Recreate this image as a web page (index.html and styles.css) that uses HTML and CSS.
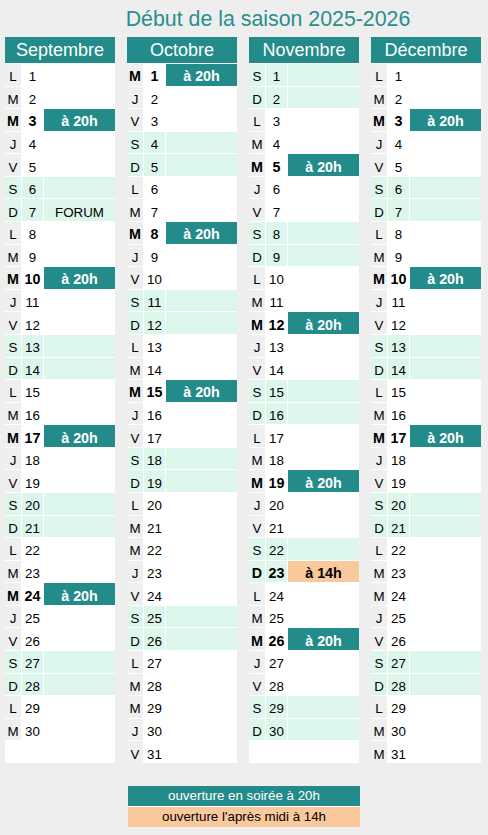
FILE: index.html
```html
<!DOCTYPE html>
<html lang="fr">
<head>
<meta charset="utf-8">
<title>Début de la saison 2025-2026</title>
<link rel="stylesheet" href="styles.css">
</head>
<body>
<h1 class="title">Début de la saison 2025-2026</h1>
<div class="months">
  <section class="month">
    <h2 class="mhead">Septembre</h2>
    <div class="row"><span class="d">L</span><span class="n">1</span><span class="e"></span></div>
    <div class="row"><span class="d">M</span><span class="n">2</span><span class="e"></span></div>
    <div class="row ev"><span class="d">M</span><span class="n">3</span><span class="e soir">à 20h</span></div>
    <div class="row"><span class="d">J</span><span class="n">4</span><span class="e"></span></div>
    <div class="row"><span class="d">V</span><span class="n">5</span><span class="e"></span></div>
    <div class="row we"><span class="d">S</span><span class="n">6</span><span class="e"></span></div>
    <div class="row we"><span class="d">D</span><span class="n">7</span><span class="e txt">FORUM</span></div>
    <div class="row"><span class="d">L</span><span class="n">8</span><span class="e"></span></div>
    <div class="row"><span class="d">M</span><span class="n">9</span><span class="e"></span></div>
    <div class="row ev"><span class="d">M</span><span class="n">10</span><span class="e soir">à 20h</span></div>
    <div class="row"><span class="d">J</span><span class="n">11</span><span class="e"></span></div>
    <div class="row"><span class="d">V</span><span class="n">12</span><span class="e"></span></div>
    <div class="row we"><span class="d">S</span><span class="n">13</span><span class="e"></span></div>
    <div class="row we"><span class="d">D</span><span class="n">14</span><span class="e"></span></div>
    <div class="row"><span class="d">L</span><span class="n">15</span><span class="e"></span></div>
    <div class="row"><span class="d">M</span><span class="n">16</span><span class="e"></span></div>
    <div class="row ev"><span class="d">M</span><span class="n">17</span><span class="e soir">à 20h</span></div>
    <div class="row"><span class="d">J</span><span class="n">18</span><span class="e"></span></div>
    <div class="row"><span class="d">V</span><span class="n">19</span><span class="e"></span></div>
    <div class="row we"><span class="d">S</span><span class="n">20</span><span class="e"></span></div>
    <div class="row we"><span class="d">D</span><span class="n">21</span><span class="e"></span></div>
    <div class="row"><span class="d">L</span><span class="n">22</span><span class="e"></span></div>
    <div class="row"><span class="d">M</span><span class="n">23</span><span class="e"></span></div>
    <div class="row ev"><span class="d">M</span><span class="n">24</span><span class="e soir">à 20h</span></div>
    <div class="row"><span class="d">J</span><span class="n">25</span><span class="e"></span></div>
    <div class="row"><span class="d">V</span><span class="n">26</span><span class="e"></span></div>
    <div class="row we"><span class="d">S</span><span class="n">27</span><span class="e"></span></div>
    <div class="row we"><span class="d">D</span><span class="n">28</span><span class="e"></span></div>
    <div class="row"><span class="d">L</span><span class="n">29</span><span class="e"></span></div>
    <div class="row"><span class="d">M</span><span class="n">30</span><span class="e"></span></div>
  </section>
  <section class="month">
    <h2 class="mhead">Octobre</h2>
    <div class="row ev"><span class="d">M</span><span class="n">1</span><span class="e soir">à 20h</span></div>
    <div class="row"><span class="d">J</span><span class="n">2</span><span class="e"></span></div>
    <div class="row"><span class="d">V</span><span class="n">3</span><span class="e"></span></div>
    <div class="row we"><span class="d">S</span><span class="n">4</span><span class="e"></span></div>
    <div class="row we"><span class="d">D</span><span class="n">5</span><span class="e"></span></div>
    <div class="row"><span class="d">L</span><span class="n">6</span><span class="e"></span></div>
    <div class="row"><span class="d">M</span><span class="n">7</span><span class="e"></span></div>
    <div class="row ev"><span class="d">M</span><span class="n">8</span><span class="e soir">à 20h</span></div>
    <div class="row"><span class="d">J</span><span class="n">9</span><span class="e"></span></div>
    <div class="row"><span class="d">V</span><span class="n">10</span><span class="e"></span></div>
    <div class="row we"><span class="d">S</span><span class="n">11</span><span class="e"></span></div>
    <div class="row we"><span class="d">D</span><span class="n">12</span><span class="e"></span></div>
    <div class="row"><span class="d">L</span><span class="n">13</span><span class="e"></span></div>
    <div class="row"><span class="d">M</span><span class="n">14</span><span class="e"></span></div>
    <div class="row ev"><span class="d">M</span><span class="n">15</span><span class="e soir">à 20h</span></div>
    <div class="row"><span class="d">J</span><span class="n">16</span><span class="e"></span></div>
    <div class="row"><span class="d">V</span><span class="n">17</span><span class="e"></span></div>
    <div class="row we"><span class="d">S</span><span class="n">18</span><span class="e"></span></div>
    <div class="row we"><span class="d">D</span><span class="n">19</span><span class="e"></span></div>
    <div class="row"><span class="d">L</span><span class="n">20</span><span class="e"></span></div>
    <div class="row"><span class="d">M</span><span class="n">21</span><span class="e"></span></div>
    <div class="row"><span class="d">M</span><span class="n">22</span><span class="e"></span></div>
    <div class="row"><span class="d">J</span><span class="n">23</span><span class="e"></span></div>
    <div class="row"><span class="d">V</span><span class="n">24</span><span class="e"></span></div>
    <div class="row we"><span class="d">S</span><span class="n">25</span><span class="e"></span></div>
    <div class="row we"><span class="d">D</span><span class="n">26</span><span class="e"></span></div>
    <div class="row"><span class="d">L</span><span class="n">27</span><span class="e"></span></div>
    <div class="row"><span class="d">M</span><span class="n">28</span><span class="e"></span></div>
    <div class="row"><span class="d">M</span><span class="n">29</span><span class="e"></span></div>
    <div class="row"><span class="d">J</span><span class="n">30</span><span class="e"></span></div>
    <div class="row"><span class="d">V</span><span class="n">31</span><span class="e"></span></div>
  </section>
  <section class="month">
    <h2 class="mhead">Novembre</h2>
    <div class="row we"><span class="d">S</span><span class="n">1</span><span class="e"></span></div>
    <div class="row we"><span class="d">D</span><span class="n">2</span><span class="e"></span></div>
    <div class="row"><span class="d">L</span><span class="n">3</span><span class="e"></span></div>
    <div class="row"><span class="d">M</span><span class="n">4</span><span class="e"></span></div>
    <div class="row ev"><span class="d">M</span><span class="n">5</span><span class="e soir">à 20h</span></div>
    <div class="row"><span class="d">J</span><span class="n">6</span><span class="e"></span></div>
    <div class="row"><span class="d">V</span><span class="n">7</span><span class="e"></span></div>
    <div class="row we"><span class="d">S</span><span class="n">8</span><span class="e"></span></div>
    <div class="row we"><span class="d">D</span><span class="n">9</span><span class="e"></span></div>
    <div class="row"><span class="d">L</span><span class="n">10</span><span class="e"></span></div>
    <div class="row"><span class="d">M</span><span class="n">11</span><span class="e"></span></div>
    <div class="row ev"><span class="d">M</span><span class="n">12</span><span class="e soir">à 20h</span></div>
    <div class="row"><span class="d">J</span><span class="n">13</span><span class="e"></span></div>
    <div class="row"><span class="d">V</span><span class="n">14</span><span class="e"></span></div>
    <div class="row we"><span class="d">S</span><span class="n">15</span><span class="e"></span></div>
    <div class="row we"><span class="d">D</span><span class="n">16</span><span class="e"></span></div>
    <div class="row"><span class="d">L</span><span class="n">17</span><span class="e"></span></div>
    <div class="row"><span class="d">M</span><span class="n">18</span><span class="e"></span></div>
    <div class="row ev"><span class="d">M</span><span class="n">19</span><span class="e soir">à 20h</span></div>
    <div class="row"><span class="d">J</span><span class="n">20</span><span class="e"></span></div>
    <div class="row"><span class="d">V</span><span class="n">21</span><span class="e"></span></div>
    <div class="row we"><span class="d">S</span><span class="n">22</span><span class="e"></span></div>
    <div class="row we ev"><span class="d">D</span><span class="n">23</span><span class="e aprem">à 14h</span></div>
    <div class="row"><span class="d">L</span><span class="n">24</span><span class="e"></span></div>
    <div class="row"><span class="d">M</span><span class="n">25</span><span class="e"></span></div>
    <div class="row ev"><span class="d">M</span><span class="n">26</span><span class="e soir">à 20h</span></div>
    <div class="row"><span class="d">J</span><span class="n">27</span><span class="e"></span></div>
    <div class="row"><span class="d">V</span><span class="n">28</span><span class="e"></span></div>
    <div class="row we"><span class="d">S</span><span class="n">29</span><span class="e"></span></div>
    <div class="row we"><span class="d">D</span><span class="n">30</span><span class="e"></span></div>
  </section>
  <section class="month">
    <h2 class="mhead">Décembre</h2>
    <div class="row"><span class="d">L</span><span class="n">1</span><span class="e"></span></div>
    <div class="row"><span class="d">M</span><span class="n">2</span><span class="e"></span></div>
    <div class="row ev"><span class="d">M</span><span class="n">3</span><span class="e soir">à 20h</span></div>
    <div class="row"><span class="d">J</span><span class="n">4</span><span class="e"></span></div>
    <div class="row"><span class="d">V</span><span class="n">5</span><span class="e"></span></div>
    <div class="row we"><span class="d">S</span><span class="n">6</span><span class="e"></span></div>
    <div class="row we"><span class="d">D</span><span class="n">7</span><span class="e"></span></div>
    <div class="row"><span class="d">L</span><span class="n">8</span><span class="e"></span></div>
    <div class="row"><span class="d">M</span><span class="n">9</span><span class="e"></span></div>
    <div class="row ev"><span class="d">M</span><span class="n">10</span><span class="e soir">à 20h</span></div>
    <div class="row"><span class="d">J</span><span class="n">11</span><span class="e"></span></div>
    <div class="row"><span class="d">V</span><span class="n">12</span><span class="e"></span></div>
    <div class="row we"><span class="d">S</span><span class="n">13</span><span class="e"></span></div>
    <div class="row we"><span class="d">D</span><span class="n">14</span><span class="e"></span></div>
    <div class="row"><span class="d">L</span><span class="n">15</span><span class="e"></span></div>
    <div class="row"><span class="d">M</span><span class="n">16</span><span class="e"></span></div>
    <div class="row ev"><span class="d">M</span><span class="n">17</span><span class="e soir">à 20h</span></div>
    <div class="row"><span class="d">J</span><span class="n">18</span><span class="e"></span></div>
    <div class="row"><span class="d">V</span><span class="n">19</span><span class="e"></span></div>
    <div class="row we"><span class="d">S</span><span class="n">20</span><span class="e"></span></div>
    <div class="row we"><span class="d">D</span><span class="n">21</span><span class="e"></span></div>
    <div class="row"><span class="d">L</span><span class="n">22</span><span class="e"></span></div>
    <div class="row"><span class="d">M</span><span class="n">23</span><span class="e"></span></div>
    <div class="row"><span class="d">M</span><span class="n">24</span><span class="e"></span></div>
    <div class="row"><span class="d">J</span><span class="n">25</span><span class="e"></span></div>
    <div class="row"><span class="d">V</span><span class="n">26</span><span class="e"></span></div>
    <div class="row we"><span class="d">S</span><span class="n">27</span><span class="e"></span></div>
    <div class="row we"><span class="d">D</span><span class="n">28</span><span class="e"></span></div>
    <div class="row"><span class="d">L</span><span class="n">29</span><span class="e"></span></div>
    <div class="row"><span class="d">M</span><span class="n">30</span><span class="e"></span></div>
    <div class="row"><span class="d">M</span><span class="n">31</span><span class="e"></span></div>
  </section>
</div>
<div class="legend">
  <div class="leg soir">ouverture en soirée à 20h</div>
  <div class="leg aprem">ouverture l'après midi à 14h</div>
</div>
</body>
</html>
```

FILE: styles.css
```css
* { box-sizing: border-box; }

body {
  margin: 0;
  background: #eeeeee;
  font-family: "Liberation Sans", Arial, sans-serif;
  color: #000;
  width: 488px;
}

.title {
  margin: 0;
  height: 37px;
  padding: 7px 0 0 48px;
  text-align: center;
  font-weight: 400;
  font-size: 21.33px;
  line-height: 24px;
  color: #2a8f8c;
}

.months {
  display: flex;
  gap: 12px;
  padding-left: 5px;
}

.month {
  width: 110px;
  background: #fff;
  display: flex;
  flex-direction: column;
  gap: 1px;
}

.mhead {
  margin: 0;
  height: 26px;
  background: #238c8a;
  color: #fff;
  font-weight: 400;
  font-size: 18px;
  line-height: 26px;
  text-align: center;
}

.row {
  display: grid;
  grid-template-columns: 16px 21px 71px;
  column-gap: 1px;
  height: 21.58px;
  font-size: 13.33px;
}

.row > span {
  display: flex;
  align-items: center;
  justify-content: center;
  padding-top: 4px;
}

.d { background: #efefef; }

.row.we > span { background: #dcf6eb; }

.row.ev .d,
.row.ev .n {
  font-weight: 700;
  font-size: 14.3px;
  padding-top: 3px;
}

.row > .e.soir {
  background: #238c8a;
  color: #fff;
  font-weight: 700;
  font-size: 14.3px;
  padding-top: 3px;
}

.row > .e.aprem {
  background: #f9c99c;
  color: #000;
  font-weight: 700;
  font-size: 14.3px;
  padding-top: 3px;
}

.legend {
  width: 232px;
  margin: 23px auto 0;
  display: flex;
  flex-direction: column;
  gap: 1px;
  background: #fff;
}

.leg {
  height: 20px;
  line-height: 20px;
  text-align: center;
  font-size: 13.33px;
}

.leg.soir { background: #238c8a; color: #fff; }
.leg.aprem { background: #f9c99c; color: #000; }
```
